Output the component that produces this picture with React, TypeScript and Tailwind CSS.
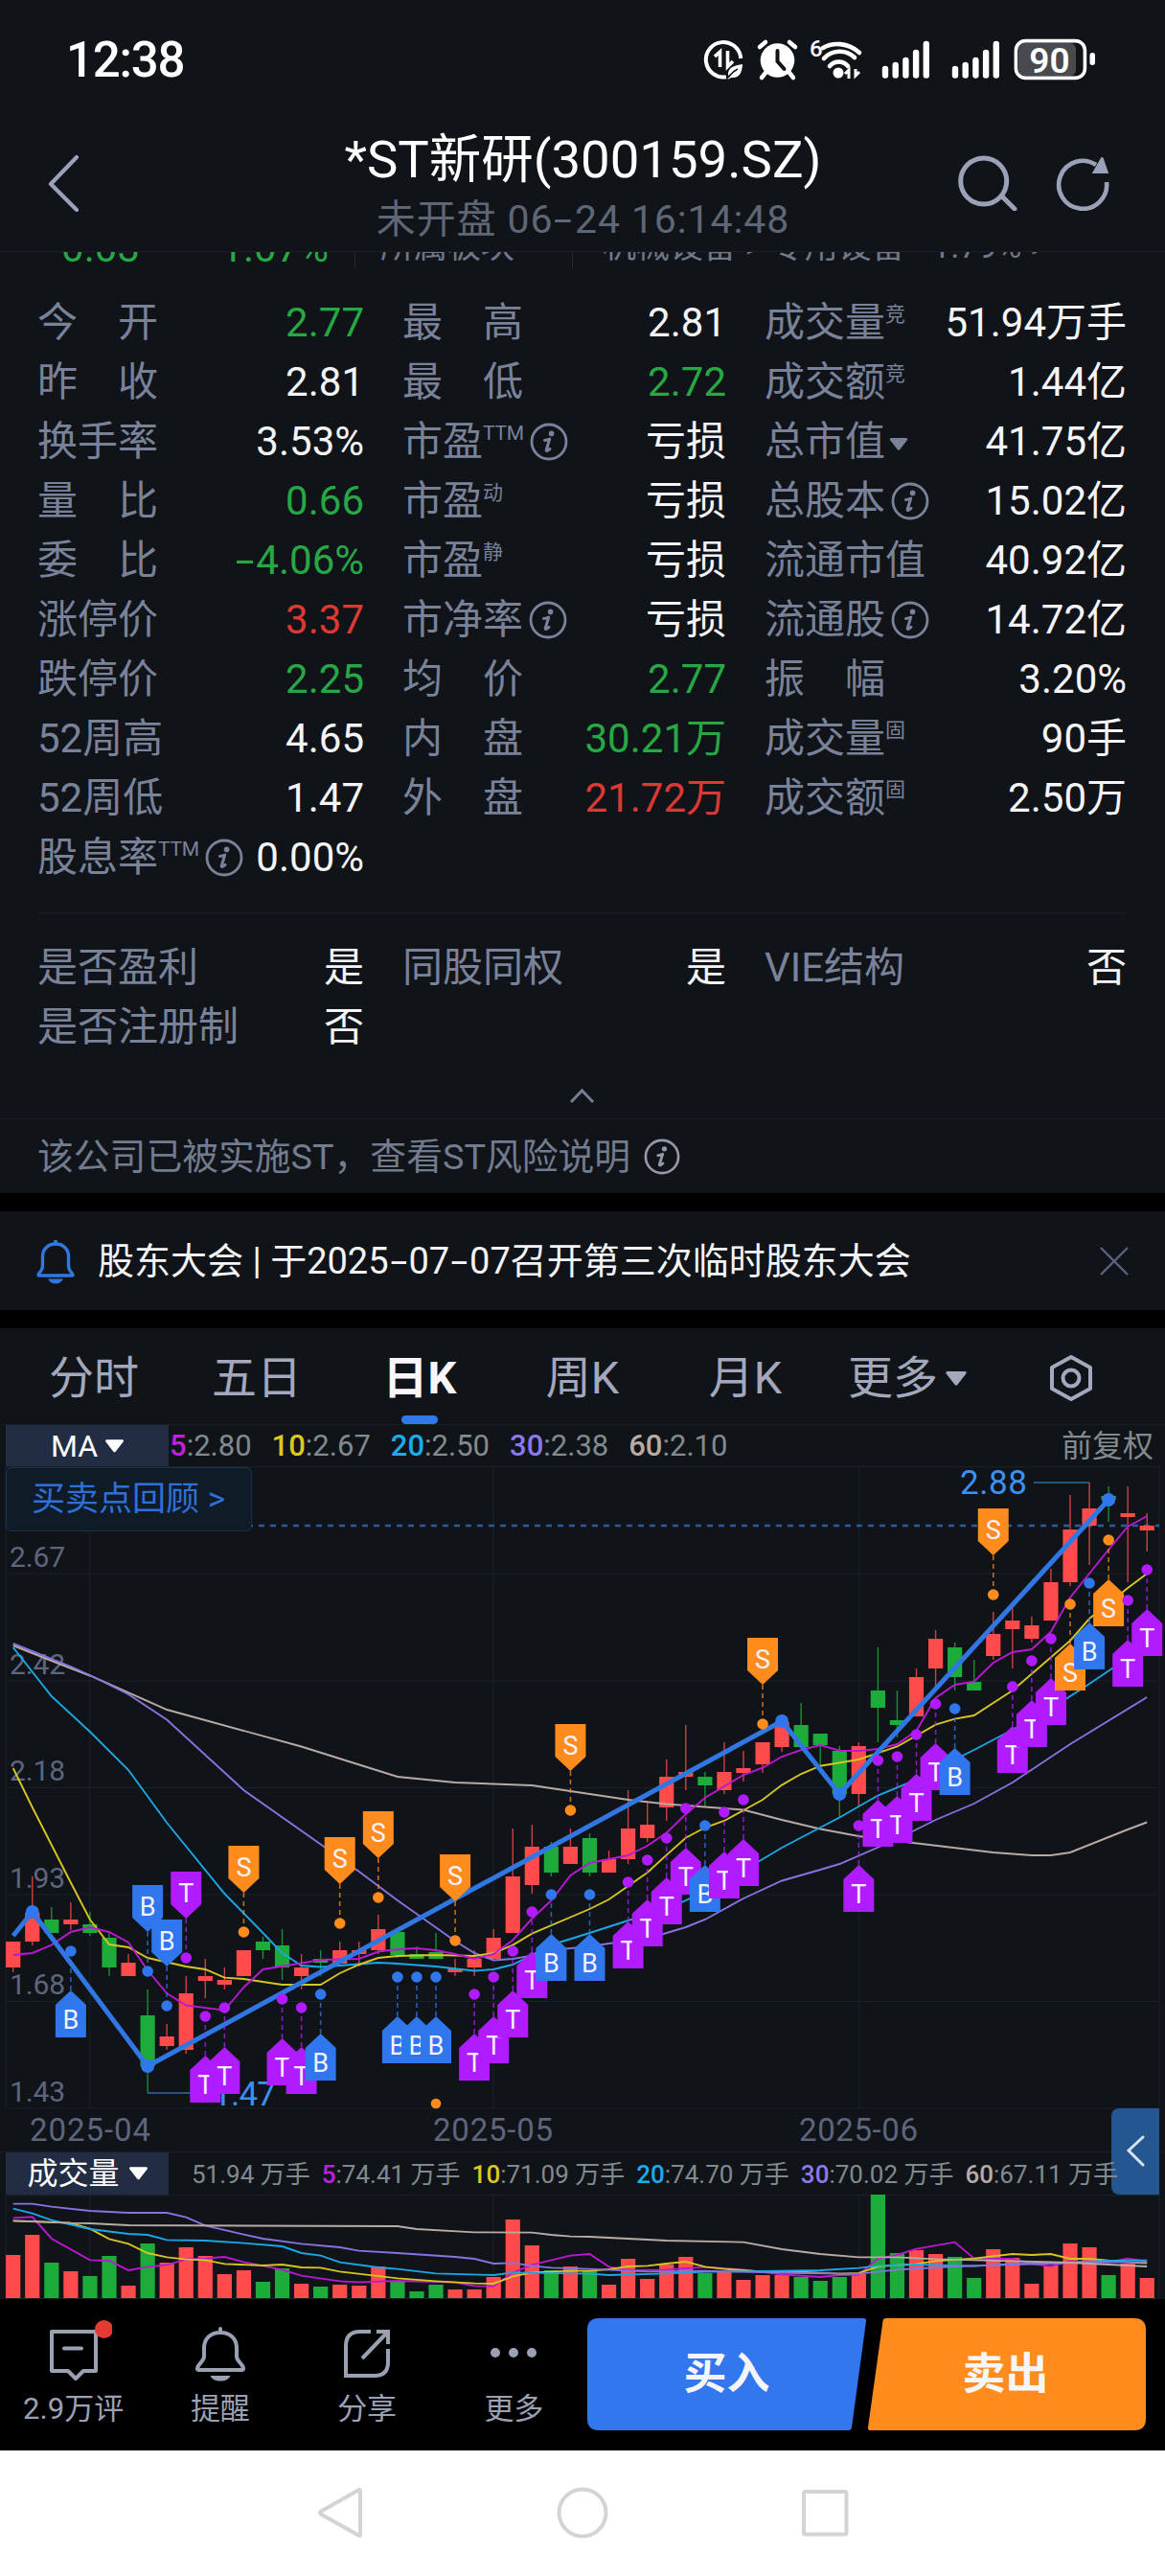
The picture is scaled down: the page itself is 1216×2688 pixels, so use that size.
import type { ReactNode } from 'react';
import clsx from 'clsx';

type Tone = 'up' | 'down' | 'plain';

interface Quote {
  label: string;
  value: string;
  tone?: Tone;
  sup?: string;
  info?: boolean;
  caret?: boolean;
}

type Candle = [kind: 'r' | 'g', top: number, bottom: number, high: number, low: number, volume: number];
type Point = [index: number, y: number];

interface Marker {
  index: number;
  dot: number;
  type: 'B' | 'S' | 'T';
  down?: boolean;
}

const quotes: Quote[] = [
  { label: '今　开', value: '2.77', tone: 'down' },
  { label: '最　高', value: '2.81' },
  { label: '成交量', value: '51.94万手', sup: '竞' },
  { label: '昨　收', value: '2.81' },
  { label: '最　低', value: '2.72', tone: 'down' },
  { label: '成交额', value: '1.44亿', sup: '竞' },
  { label: '换手率', value: '3.53%' },
  { label: '市盈', value: '亏损', sup: 'TTM', info: true },
  { label: '总市值', value: '41.75亿', caret: true },
  { label: '量　比', value: '0.66', tone: 'down' },
  { label: '市盈', value: '亏损', sup: '动' },
  { label: '总股本', value: '15.02亿', info: true },
  { label: '委　比', value: '-4.06%', tone: 'down' },
  { label: '市盈', value: '亏损', sup: '静' },
  { label: '流通市值', value: '40.92亿' },
  { label: '涨停价', value: '3.37', tone: 'up' },
  { label: '市净率', value: '亏损', info: true },
  { label: '流通股', value: '14.72亿', info: true },
  { label: '跌停价', value: '2.25', tone: 'down' },
  { label: '均　价', value: '2.77', tone: 'down' },
  { label: '振　幅', value: '3.20%' },
  { label: '52周高', value: '4.65' },
  { label: '内　盘', value: '30.21万', tone: 'down' },
  { label: '成交量', value: '90手', sup: '固' },
  { label: '52周低', value: '1.47' },
  { label: '外　盘', value: '21.72万', tone: 'up' },
  { label: '成交额', value: '2.50万', sup: '固' },
  { label: '股息率', value: '0.00%', sup: 'TTM', info: true },
];

const flags: Quote[] = [
  { label: '是否盈利', value: '是' },
  { label: '同股同权', value: '是' },
  { label: 'VIE结构', value: '否' },
  { label: '是否注册制', value: '否' },
];

// kind, body top, body bottom, wick top, wick bottom, volume bar top
const candles: Candle[] = [
  ['r', 2027, 2054, 2027, 2059, 2354],
  ['r', 1997, 2027, 1959, 2031, 2333],
  ['g', 2004, 2018, 1991, 2018, 2362],
  ['r', 2004, 2009, 1986, 2015, 2371],
  ['g', 2009, 2018, 1996, 2021, 2376],
  ['g', 2023, 2054, 2018, 2063, 2355],
  ['r', 2049, 2063, 2040, 2063, 2386],
  ['g', 2104, 2157, 2077, 2185, 2342],
  ['r', 2126, 2136, 2113, 2140, 2362],
  ['r', 2081, 2140, 2063, 2144, 2346],
  ['r', 2063, 2068, 2045, 2086, 2355],
  ['r', 2067, 2072, 2054, 2077, 2374],
  ['r', 2036, 2063, 2036, 2063, 2370],
  ['g', 2027, 2036, 2022, 2045, 2382],
  ['g', 2031, 2054, 2014, 2067, 2368],
  ['r', 2054, 2063, 2040, 2077, 2384],
  ['g', 2045, 2049, 2036, 2063, 2387],
  ['r', 2036, 2050, 2027, 2050, 2385],
  ['r', 2036, 2040, 2027, 2053, 2386],
  ['r', 2014, 2036, 1999, 2040, 2366],
  ['g', 2017, 2041, 2017, 2044, 2381],
  ['g', 2040, 2045, 2032, 2045, 2392],
  ['g', 2038, 2045, 2018, 2045, 2385],
  ['r', 2055, 2059, 2045, 2063, 2390],
  ['r', 2045, 2054, 2036, 2063, 2390],
  ['r', 2023, 2045, 2014, 2045, 2377],
  ['r', 1959, 2018, 1909, 2018, 2317],
  ['r', 1928, 1968, 1905, 1977, 2344],
  ['g', 1928, 1955, 1923, 1959, 2370],
  ['r', 1928, 1946, 1909, 1946, 2366],
  ['g', 1919, 1955, 1914, 1959, 2371],
  ['r', 1941, 1955, 1932, 1955, 2385],
  ['r', 1909, 1941, 1869, 1946, 2358],
  ['r', 1905, 1919, 1882, 1923, 2379],
  ['r', 1855, 1887, 1837, 1901, 2364],
  ['r', 1850, 1855, 1801, 1869, 2356],
  ['g', 1855, 1864, 1850, 1887, 2373],
  ['r', 1850, 1869, 1819, 1873, 2372],
  ['r', 1846, 1851, 1828, 1860, 2380],
  ['r', 1819, 1842, 1819, 1851, 2375],
  ['r', 1798, 1824, 1798, 1829, 2375],
  ['g', 1801, 1824, 1778, 1824, 2377],
  ['g', 1810, 1822, 1810, 1844, 2381],
  ['g', 1828, 1873, 1823, 1897, 2377],
  ['r', 1823, 1873, 1819, 1887, 2374],
  ['g', 1765, 1783, 1720, 1819, 2291],
  ['g', 1796, 1801, 1765, 1814, 2352],
  ['r', 1751, 1792, 1742, 1792, 2349],
  ['r', 1711, 1742, 1702, 1761, 2353],
  ['g', 1720, 1751, 1715, 1765, 2356],
  ['g', 1756, 1765, 1733, 1765, 2378],
  ['r', 1706, 1729, 1683, 1733, 2348],
  ['r', 1692, 1701, 1678, 1742, 2357],
  ['r', 1697, 1711, 1688, 1715, 2384],
  ['r', 1652, 1692, 1638, 1692, 2365],
  ['r', 1597, 1652, 1561, 1656, 2342],
  ['r', 1575, 1593, 1548, 1634, 2346],
  ['g', 1562, 1566, 1552, 1589, 2375],
  ['r', 1580, 1584, 1552, 1652, 2363],
  ['r', 1593, 1598, 1580, 1620, 2378],
];

const priceLines: { color: string; points: Point[] }[] = [
  {
    color: '#b9aaa4',
    points: [[0, 1718], [2, 1734], [4, 1749.5], [8, 1785], [15, 1823.5], [20, 1855], [21, 1857], [23, 1861], [27, 1864], [32, 1879], [34, 1883.5], [37, 1888], [38, 1889.5], [40, 1900], [42, 1909.5], [44, 1917], [46, 1922], [51, 1934], [53, 1937], [54, 1937], [55, 1934], [58, 1910], [59, 1902.5]],
  },
  {
    color: '#8573e0',
    points: [[0, 1716], [3, 1740], [4, 1749], [6, 1769], [8, 1795.5], [12, 1869], [16, 1925.5], [18, 1954], [20, 1984], [23, 2026.5], [24, 2039], [25, 2046.5], [26, 2045], [27, 2041.6], [28, 2036], [30, 2032], [31, 2029], [33, 2024], [35, 2012], [36, 2004], [38, 1982], [40, 1963.5], [42, 1952], [43, 1946], [46, 1920], [48, 1900], [50, 1883], [52, 1861], [55, 1821], [59, 1772]],
  },
  {
    color: '#1ba7e6',
    points: [[0, 1720], [2, 1771], [4, 1808], [6, 1848], [8, 1903], [11, 1977], [13, 2018], [14, 2039], [15, 2052], [16, 2053.5], [19, 2049], [20, 2050], [22, 2053], [24, 2057.5], [25, 2056], [26, 2051], [27, 2041], [28, 2030.5], [30, 2018], [32, 2005], [34, 1993], [36, 1975], [38, 1953], [40, 1929], [42, 1908], [43, 1897.5], [45, 1874.5], [47, 1858], [49, 1837], [50, 1827], [52, 1806], [54, 1784], [56, 1758], [58, 1731], [59, 1717]],
  },
  {
    color: '#d6c521',
    points: [[0, 1846], [1, 1887], [3, 1965.5], [4, 2004], [5, 2030], [6, 2033], [7, 2044], [9, 2053], [10, 2056], [11, 2064.6], [12, 2066], [14, 2072], [16, 2072], [17, 2060], [18, 2051], [19, 2044], [20, 2042], [22, 2041], [24, 2042], [25, 2039], [26, 2030.6], [27, 2018.6], [30, 1993], [31, 1983], [33, 1955], [34, 1936.6], [35, 1918.7], [36, 1908], [37, 1901], [38, 1890], [39, 1879], [40, 1863.6], [41, 1852], [42, 1843.7], [44, 1837], [46, 1823.5], [48, 1800.6], [49, 1794.6], [50, 1791], [52, 1765], [55, 1713], [56, 1690], [58, 1658], [59, 1643]],
  },
  {
    color: '#bb18d2',
    points: [[0, 2041], [1, 2039], [2, 2030.6], [3, 2017], [4, 2012], [5, 2017], [6, 2028], [7, 2057], [8, 2081], [9, 2093.5], [11, 2098.6], [12, 2074.7], [13, 2056], [15, 2049.5], [16, 2046], [18, 2045], [19, 2037.5], [20, 2035], [21, 2034], [22, 2036], [23, 2040], [24, 2045], [25, 2040], [26, 2025.5], [27, 2003], [28, 1984], [29, 1958], [30, 1945], [32, 1937], [33, 1927], [34, 1913.5], [35, 1894], [36, 1877], [38, 1853], [39, 1845.7], [40, 1834], [41, 1827], [42, 1822], [43, 1827.7], [44, 1828], [45, 1826], [46, 1821], [47, 1807], [48, 1772.6], [49, 1759], [50, 1755.6], [51, 1736], [52, 1725], [53, 1722], [54, 1703.7], [55, 1668], [57, 1618], [58, 1594], [59, 1583]],
  },
];

const volumeLines: { color: string; points: Point[] }[] = [
  {
    color: '#bb18d2',
    points: [[0, 286], [1, 283], [2, 351], [4, 418], [5, 420], [6, 450], [7, 439], [8, 433], [9, 416], [10, 413], [11, 408], [12, 424], [14, 448], [15, 467], [17, 484], [18, 487], [20, 483], [22, 486], [23, 488], [24, 499], [25, 500], [26, 457], [27, 433], [29, 404], [30, 399], [31, 439], [32, 450], [34, 448], [36, 440], [38, 448], [40, 463], [42, 471], [43, 465], [44, 464], [45, 414], [46, 402], [47, 383], [49, 362], [50, 413], [52, 414], [53, 430], [54, 437], [55, 422], [57, 425], [58, 413], [59, 422]],
  },
  {
    color: '#d6c521',
    points: [[0, 295], [3, 302], [4, 320], [5, 352], [6, 367], [7, 396], [8, 409], [9, 416], [10, 418], [11, 430], [13, 435], [14, 432], [15, 441], [16, 442], [17, 454], [20, 475], [22, 484], [24, 491], [25, 492], [26, 469], [27, 457], [29, 452], [30, 452], [31, 447], [32, 438], [33, 436], [34, 429], [35, 423], [36, 439], [37, 446], [39, 454], [41, 455], [43, 461], [44, 459], [45, 438], [47, 430], [48, 421], [50, 413], [52, 399], [53, 402], [54, 399], [55, 414], [56, 414], [58, 425], [59, 428]],
  },
  {
    color: '#1ba7e6',
    points: [[0, 257], [1, 272], [2, 293], [4, 321], [6, 336], [7, 339], [8, 355], [10, 357], [12, 365], [14, 375], [15, 396], [16, 404], [17, 425], [19, 441], [20, 446], [22, 460], [25, 465], [26, 457], [30, 461], [31, 465], [34, 460], [36, 455], [39, 453], [42, 450], [44, 443], [45, 436], [47, 432], [50, 437], [52, 430], [55, 426], [57, 420], [59, 419]],
  },
  {
    color: '#8573e0',
    points: [[0, 242], [1, 242], [2, 251], [4, 264], [6, 270], [8, 270], [9, 284], [10, 310], [12, 338], [13, 351], [15, 367], [17, 378], [18, 389], [20, 396], [23, 408], [24, 414], [25, 429], [26, 427], [27, 436], [28, 442], [30, 446], [33, 454], [36, 452], [38, 455], [41, 459], [44, 461], [46, 448], [49, 438], [52, 432], [56, 425], [59, 424]],
  },
  {
    color: '#b9aaa4',
    points: [[0, 295], [1, 297], [3, 302], [4, 303], [6, 309], [20, 312], [21, 321], [24, 331], [27, 332], [28, 339], [29, 344], [30, 345], [34, 357], [38, 362], [40, 384], [42, 399], [44, 409], [46, 409], [48, 415], [52, 421], [55, 426], [57, 432], [59, 438]],
  },
];

const trend: Point[] = [[0, 2021], [1, 1996], [7, 2157], [40, 1797], [43, 1873], [57, 1566]];

const markers: Marker[] = [
  { index: 3, dot: 2037, type: 'B' },
  { index: 7, dot: 2058, type: 'B', down: true },
  { index: 8, dot: 2094, type: 'B', down: true },
  { index: 9, dot: 2044, type: 'T', down: true },
  { index: 10, dot: 2105, type: 'T' },
  { index: 11, dot: 2096, type: 'T' },
  { index: 12, dot: 2017, type: 'S', down: true },
  { index: 14, dot: 2087, type: 'T' },
  { index: 15, dot: 2096, type: 'T' },
  { index: 16, dot: 2082, type: 'B' },
  { index: 17, dot: 2008, type: 'S', down: true },
  { index: 19, dot: 1981, type: 'S', down: true },
  { index: 20, dot: 2064, type: 'B' },
  { index: 21, dot: 2064, type: 'B' },
  { index: 22, dot: 2064, type: 'B' },
  { index: 23, dot: 2026, type: 'S', down: true },
  { index: 24, dot: 2082, type: 'T' },
  { index: 25, dot: 2064, type: 'T' },
  { index: 26, dot: 2037, type: 'T' },
  { index: 27, dot: 1996, type: 'T' },
  { index: 28, dot: 1978, type: 'B' },
  { index: 29, dot: 1890, type: 'S', down: true },
  { index: 30, dot: 1978, type: 'B' },
  { index: 32, dot: 1965, type: 'T' },
  { index: 33, dot: 1942, type: 'T' },
  { index: 34, dot: 1919, type: 'T' },
  { index: 35, dot: 1888, type: 'T' },
  { index: 36, dot: 1906, type: 'B' },
  { index: 37, dot: 1892, type: 'T' },
  { index: 38, dot: 1879, type: 'T' },
  { index: 39, dot: 1800, type: 'S', down: true },
  { index: 44, dot: 1906, type: 'T' },
  { index: 45, dot: 1838, type: 'T' },
  { index: 46, dot: 1834, type: 'T' },
  { index: 47, dot: 1811, type: 'T' },
  { index: 48, dot: 1779, type: 'T' },
  { index: 49, dot: 1784, type: 'B' },
  { index: 51, dot: 1665, type: 'S', down: true },
  { index: 52, dot: 1761, type: 'T' },
  { index: 53, dot: 1734, type: 'T' },
  { index: 54, dot: 1711, type: 'T' },
  { index: 55, dot: 1675, type: 'S' },
  { index: 56, dot: 1653, type: 'B' },
  { index: 57, dot: 1608, type: 'S' },
  { index: 58, dot: 1671, type: 'T' },
  { index: 59, dot: 1639, type: 'T' },
];

const markerColors = { B: '#3077ee', S: '#ff8c1c', T: '#b01cff' };
const candleColors = { r: '#ff4b4b', g: '#1dab3a' };
const averages = [
  { period: '5', price: '2.80', volume: '74.41', color: 'text-[#c01fe0]' },
  { period: '10', price: '2.67', volume: '71.09', color: 'text-[#dcc81f]' },
  { period: '20', price: '2.50', volume: '74.70', color: 'text-[#1cabed]' },
  { period: '30', price: '2.38', volume: '70.02', color: 'text-[#8c78ec]' },
  { period: '60', price: '2.10', volume: '67.11', color: 'text-[#b9aaa4]' },
];

const xAt = (index: number) => 13.7 + index * 20.06;
const toPoints = (points: Point[]) =>
  points.map(([i, y]) => `${xAt(i).toFixed(1)},${y}`).join(' ');

const Tabular = ({ text }: { text: string }) => (
  <>
    {text.split(/(-)/).map((part, i) =>
      part === '-' ? (
        <span key={i} className="inline-block w-[0.55em] scale-x-[1.7] text-center">
          -
        </span>
      ) : (
        part
      ),
    )}
  </>
);

const InfoIcon = ({ className }: { className?: string }) => (
  <svg viewBox="0 0 40 40" className={clsx('shrink-0', className)} fill="none">
    <circle cx="20" cy="20" r="18" stroke="currentColor" strokeWidth="2.8" />
    <circle cx="22.6" cy="11.4" r="2.8" fill="currentColor" />
    <path
      d="M15.5 18.5c2.6-.2 4-1 5.2-1.4l-3.4 11.2c-.4 1.6.6 1.9 3.7-.9"
      stroke="currentColor"
      strokeWidth="3"
      strokeLinecap="round"
      strokeLinejoin="round"
    />
  </svg>
);

const Caret = ({ className }: { className?: string }) => (
  <svg viewBox="0 0 20 14" className={clsx('shrink-0', className)} fill="currentColor">
    <path d="M1.5 0h17c1.3 0 1.9 1.3 1.1 2.3l-8.4 10.8c-.6.8-1.8.8-2.4 0L.4 2.3C-.4 1.3.2 0 1.5 0z" />
  </svg>
);

const QuoteCell = ({ label, value, tone = 'plain', sup, info, caret }: Quote) => (
  <div className="flex h-[62px] items-center justify-between whitespace-nowrap">
    <div className="flex items-center text-[#7a8299]">
      <span>{label}</span>
      {sup && (
        <span className="mb-[18px] text-[21px] leading-[24px] tracking-[-0.3px]">{sup}</span>
      )}
      {info && <InfoIcon className="ml-[6px] size-[40px]" />}
      {caret && <Caret className="mt-1 ml-1 h-[13px] w-[20px]" />}
    </div>
    <span
      className={clsx(
        tone === 'up' && 'text-[#dd3934]',
        tone === 'down' && 'text-[#27a844]',
        tone === 'plain' && 'text-[#f5f5f8]',
      )}
    >
      <Tabular text={value} />
    </span>
  </div>
);

const StatusBar = () => (
  <div className="flex h-[124px] items-center justify-between pr-[70px] pl-[69px] text-white">
    <span className="mt-[2px] text-[51px] leading-[60px] font-medium tracking-[-1.2px]">12:38</span>
    <svg width="412" height="46" viewBox="734 38 412 46" fill="none">
      <path d="M758 79.2A18.2 18.2 0 1 1 773.2 60" stroke="#fff" strokeWidth="4" />
      <path d="M746 58l5.5-5v16M765 63l-5.5 5.5V52" stroke="#fff" strokeWidth="3.6" />
      <path d="M775 66c-9 1-15 4-15 10 0 2 1 3 1 3s-1 1-1.5 3c2-1 3-2 4-2 8 1 11-5 11.5-14z" fill="#fff" />
      <path d="M760 80c3-4 6-7 10-9" stroke="#101419" strokeWidth="1.5" />
      <circle cx="811.5" cy="62" r="17.8" fill="#fff" />
      <path d="M793 48l6-5M830 48l-6-5M799 75l-4 5M824 75l4 5" stroke="#fff" strokeWidth="4.5" strokeLinecap="round" />
      <path d="M811.5 52v11l7 8" stroke="#101419" strokeWidth="4" strokeLinecap="round" />
      <text x="845" y="58" fontSize="24" fontWeight="500" fill="#fff">6</text>
      <path d="M859 49c10-6 26-6 38 5M860 60c8-9 23-10 32-1M866 68c5-6 14-6 19 0" stroke="#fff" strokeWidth="4.6" strokeLinecap="round" />
      <circle cx="875" cy="75" r="5.5" fill="#fff" />
      <path d="M882 76l4-4v9M897 74l-4 4V71" stroke="#fff" strokeWidth="3" />
      {[924, 997].map((left) => (
        <g key={left} stroke="#fff" strokeWidth="6.4" strokeLinecap="round">
          {[71, 67, 62, 54, 45].map((top, i) => (
            <path key={top} d={`M${left + i * 10.7} ${top}V77.5`} />
          ))}
        </g>
      ))}
      <rect x="1063" y="44" width="60" height="34" rx="6" fill="#484a50" />
      <rect x="1060.4" y="41.6" width="72" height="38.8" rx="10" stroke="#fff" strokeWidth="3.6" />
      <rect x="1137.5" y="54" width="5.5" height="13" rx="2.7" fill="#fff" />
      <text x="1095.5" y="74.5" fontSize="37" fontWeight="600" fill="#fff" textAnchor="middle">90</text>
    </svg>
  </div>
);

const Header = () => (
  <div className="flex h-[138px] items-start justify-between pr-[56px] pl-[49px] text-[#9ba1b6]">
    <svg width="34" height="60" viewBox="0 0 34 60" fill="none" className="mt-[37px]">
      <path d="M31 3L4 31l27 27" stroke="currentColor" strokeWidth="4.2" strokeLinejoin="round" strokeLinecap="round" />
    </svg>
    <div className="ml-[136px] flex flex-col items-center whitespace-nowrap">
      <h1 className="mt-[9px] text-[54.5px] leading-[66px] text-white">*ST新研(300159.SZ)</h1>
      <p className="mt-[2px] text-[41px] leading-[56px] tracking-[0.9px] text-[#5f6675]">
        <Tabular text="未开盘 06-24 16:14:48" />
      </p>
    </div>
    <svg width="162" height="60" viewBox="1000 160 162 60" fill="none" className="mt-9">
      <circle cx="1028.7" cy="189" r="24" stroke="currentColor" strokeWidth="5" />
      <path d="M1048 205l13 13" stroke="currentColor" strokeWidth="5" strokeLinecap="round" />
      <path d="M1157 190a25 25 0 1 1-11-18" stroke="currentColor" strokeWidth="4.6" />
      <path d="M1141.7 181l9.5-16.5q1.5-1 2.5.5l5.5 16z" fill="currentColor" />
    </svg>
  </div>
);

// Row scrolled under the header, only the bottom of it shows
const ClippedRow = () => (
  <div className="h-[44px] overflow-hidden border-t border-[#1a1d23]">
    <div className="-mt-[35px] flex h-[60px] items-center whitespace-nowrap text-[#6f7789]">
      <span className="w-[146px] text-right text-[42px] text-[#27a844]">-0.03</span>
      <span className="w-[197px] text-right text-[42px] text-[#27a844]">-1.07%</span>
      <span className="mt-6 ml-[27px] h-[20px] w-px bg-[#232832]" />
      <span className="ml-[26px] w-[200px] text-[35px]">所属板块</span>
      <span className="mt-6 h-[20px] w-px bg-[#232832]" />
      <span className="ml-[31px] text-[35px]">
        机械设备 &gt; 专用设备 <Tabular text="-1.79%" /> &gt;
      </span>
    </div>
  </div>
);

const Badge = ({ index, dot, type, down }: Marker) => {
  const x = xAt(index);
  const color = markerColors[type];
  const dir = down ? -1 : 1;
  return (
    <g>
      <path
        d={`M${x} ${dot + 9 * dir}V${dot + 41 * dir}`}
        stroke={color}
        strokeWidth="1.6"
        strokeDasharray="5 4"
        opacity="0.75"
      />
      <circle cx={x} cy={dot} r="5.8" fill={color} />
      <path
        d={`M${x} ${dot + 41 * dir}l16 ${15 * dir}v${34 * dir}h-32v${-34 * dir}z`}
        fill={color}
      />
      <text
        x={x}
        y={down ? dot - 58.5 : dot + 80.5}
        fontSize="27"
        fill="#f6f1ff"
        textAnchor="middle"
      >
        {type}
      </text>
    </g>
  );
};

const PriceChart = () => (
  <div className="relative h-[715px]">
    <svg width="1216" height="715" viewBox="0 1531 1216 715" className="block" fill="none">
      <g stroke="#17212b" strokeWidth="1.2">
        {[1531.6, 1643, 1755, 1866.5, 1978, 2089.5, 2201].map((y) => (
          <path key={y} d={`M6 ${y}H1210`} />
        ))}
        {[6, 93.7, 515, 896.7, 1210].map((x) => (
          <path key={x} d={`M${x} 1531V2201`} />
        ))}
      </g>
      <path d="M6 1593H1210" stroke="#2b599c" strokeWidth="2.4" strokeDasharray="6 6" />
      <g fill="#5e657d" fontSize="30">
        {['2.67', '2.42', '2.18', '1.93', '1.68', '1.43'].map((label, i) => (
          <text key={label} x="10" y={1636 + i * 111.6} textLength="58">
            {label}
          </text>
        ))}
      </g>
      <g fill="#5e657d" fontSize="33">
        <text x="31" y="2235" textLength="126">2025-04</text>
        <text x="452" y="2235" textLength="125">2025-05</text>
        <text x="834" y="2235" textLength="124">2025-06</text>
      </g>
      {candles.map(([kind, top, bottom, high, low], i) => (
        <g key={i}>
          <path d={`M${xAt(i)} ${high}V${low}`} stroke={candleColors[kind]} strokeWidth="1.4" opacity="0.8" />
          <rect x={xAt(i) - 7.6} y={top} width="15.2" height={bottom - top} fill={candleColors[kind]} />
        </g>
      ))}
      {priceLines.map((line) => (
        <polyline key={line.color} points={toPoints(line.points)} stroke={line.color} strokeWidth="1.9" />
      ))}
      <polyline points={toPoints(trend)} stroke="#3077e4" strokeWidth="5" />
      {trend.slice(1).map(([i, y]) => (
        <circle key={i} cx={xAt(i)} cy={y} r="7" fill="#3077ee" />
      ))}
      <path d="M1079 1548H1137M154 2185H228" stroke="#2e6aa8" strokeWidth="1.6" />
      <text x="1002" y="1560" fontSize="35" fill="#3c92f4" textLength="70">2.88</text>
      <text x="222" y="2198" fontSize="35" fill="#3c92f4" textLength="66">1.47</text>
      <circle cx={xAt(22)} cy="2196" r="5.3" fill="#ff8c1c" />
      {markers.map((marker) => (
        <Badge key={marker.index} {...marker} />
      ))}
    </svg>
    <button
      type="button"
      className="absolute top-px left-[6px] flex h-[67px] w-[257px] items-center rounded-md border border-[#19334f] bg-[#101b28] pt-[2px] pl-[26px] text-[35px] whitespace-nowrap text-[#2f70d8]"
    >
      买卖点回顾 &gt;
    </button>
    <button
      type="button"
      className="absolute top-[670px] left-[1160px] flex h-[90px] w-[50px] items-center justify-center rounded-l-lg bg-[#24568f]"
    >
      <svg width="20" height="34" viewBox="0 0 20 34" fill="none">
        <path d="M18 2L3 16l15 15" stroke="#d6e2f2" strokeWidth="3" strokeLinecap="round" />
      </svg>
    </button>
  </div>
);

const VolumeChart = () => (
  <svg width="1216" height="109" viewBox="0 2291 1216 109" className="block" fill="none">
    <g stroke="#17212b" strokeWidth="1.2">
      <path d="M6 2291.6H1210M6 2399.5H1210" />
      {[6, 93.7, 515, 896.7, 1210].map((x) => (
        <path key={x} d={`M${x} 2291V2399`} />
      ))}
    </g>
    {candles.map(([kind, , , , , top], i) => (
      <rect key={i} x={xAt(i) - 7.6} y={top} width="15.2" height={2399 - top} fill={candleColors[kind]} />
    ))}
    {volumeLines.map((line) => (
      <polyline
        key={line.color}
        points={toPoints(line.points.map(([i, v]) => [i, 2220 + v / 3]))}
        stroke={line.color}
        strokeWidth="1.9"
      />
    ))}
  </svg>
);

const Tab = ({ children, active }: { children: ReactNode; active?: boolean }) => (
  <div
    className={clsx(
      'relative flex flex-1 items-center justify-center pt-[4px] text-[47px] whitespace-nowrap',
      active ? 'font-bold text-[#f8f6fb]' : 'text-[#a3a8bd]',
    )}
  >
    {children}
    {active && (
      <span className="absolute bottom-0 left-1/2 h-[9px] w-[38px] -translate-x-1/2 rounded-full bg-[#3277ec]" />
    )}
  </div>
);

const Action = ({ label, children }: { label: string; children: ReactNode }) => (
  <div className="flex w-[153.3px] flex-col items-center text-[#9ba1b4]">
    <svg width="80" height="70" viewBox="0 0 80 70" fill="none" stroke="currentColor" strokeWidth="4">
      {children}
    </svg>
    <span className="mt-[3px] text-[31px] leading-[40px]">{label}</span>
  </div>
);

const App = () => {
  return (
    <div className="w-[1216px] bg-[#101419] font-[Roboto,'Noto_Sans_CJK_SC',sans-serif]">
      <StatusBar />
      <Header />
      <ClippedRow />

      <div className="grid grid-cols-[341px_338px_378px] gap-x-[40px] pl-[39px] text-[42px] leading-[62px]">
        {quotes.map((quote, i) => (
          <QuoteCell key={i} {...quote} />
        ))}
      </div>
      <div className="mx-[40px] mt-[26px] h-px bg-[#1a1e24]" />
      <div className="mt-[26px] grid grid-cols-[341px_338px_378px] gap-x-[40px] pl-[39px] text-[42px] leading-[62px]">
        {flags.map((flag) => (
          <QuoteCell key={flag.label} {...flag} />
        ))}
      </div>
      <div className="flex h-[64px] items-end justify-center pb-[15px]">
        <svg width="27" height="17" viewBox="0 0 27 17" fill="none" className="-translate-x-px">
          <path d="M2 15L13.5 3 25 15" stroke="#757d90" strokeWidth="3" />
        </svg>
      </div>
      <div className="flex h-[78px] items-center border-t border-[#1a1e24] pl-[39px] text-[37.8px] text-[#737b8f]">
        <span className="mt-px whitespace-nowrap">该公司已被实施ST，查看ST风险说明</span>
        <InfoIcon className="ml-[14px] size-[38px] text-[#9399ab]" />
      </div>

      <div className="flex h-[141px] items-center border-y-[19px] border-black pr-[38px] pl-[37px] text-[38px] text-[#f4f4f7]">
        <svg width="42" height="46" viewBox="0 0 42 46" fill="none" className="mt-[2px] mr-[23px]">
          <path
            d="M21 4c-8 0-13.5 5.5-13.5 13v8c0 5-1 6.5-4 10-1 1.2-.5 2 .8 2h33.4c1.3 0 1.8-.8.8-2-3-3.5-4-5-4-10v-8C34.5 9.5 29 4 21 4z"
            stroke="#3277de"
            strokeWidth="3.4"
          />
          <path d="M21 4V1" stroke="#3277de" strokeWidth="3.6" strokeLinecap="round" />
          <path d="M13 40.5h16c-1.5 3-4.5 5-8 5s-6.5-2-8-5z" fill="#3277de" />
        </svg>
        <span className="mt-px whitespace-nowrap">
          <Tabular text="股东大会 | 于2025-07-07召开第三次临时股东大会" />
        </span>
        <svg width="30" height="30" viewBox="0 0 30 30" fill="none" className="ml-auto">
          <path d="M1 1l28 28M29 1L1 29" stroke="#5d6480" strokeWidth="2.4" />
        </svg>
      </div>

      <div className="flex h-[100px] px-[13px]">
        <Tab>分时</Tab>
        <Tab>五日</Tab>
        <Tab active>日K</Tab>
        <Tab>周K</Tab>
        <Tab>月K</Tab>
        <Tab>
          更多
          <Caret className="mr-[2px] ml-[8px] h-[15px] w-[22px]" />
        </Tab>
        <Tab>
          <svg width="46" height="50" viewBox="0 0 46 50" fill="none" stroke="currentColor" strokeWidth="4">
            <path d="M23 3l20 11v22L23 47 3 36V14z" strokeLinejoin="round" />
            <circle cx="23" cy="25" r="8.5" />
          </svg>
        </Tab>
      </div>

      <div className="flex h-[44px] items-center border-t border-[#191f27] pr-[12px] pl-[6px] text-[32px] leading-[44px] whitespace-nowrap text-[#818b8f]">
        <div className="flex h-[44px] w-[170px] items-center justify-center bg-[#222d43] text-white">
          MA
          <Caret className="ml-2 h-[14px] w-[19px]" />
        </div>
        <div className="flex gap-[21px] pl-px text-[31px]">
          {averages.map((item) => (
            <span key={item.period}>
              <b className={clsx('font-medium', item.color)}>{item.period}</b>:{item.price}
            </span>
          ))}
        </div>
        <span className="ml-auto">前复权</span>
      </div>
      <PriceChart />
      <div className="flex h-[45px] items-center border-t border-[#191f27] pl-[6px] text-[26px] leading-[45px] whitespace-nowrap text-[#818b8f]">
        <div className="flex h-[45px] w-[170px] items-center justify-center bg-[#222d43] text-[32px] text-white">
          成交量
          <Caret className="ml-[10px] h-[14px] w-[19px]" />
        </div>
        <div className="relative mt-[2px] flex gap-[12px] pl-[24px]">
          <span>51.94 万手</span>
          {averages.map((item) => (
            <span key={item.period}>
              <b className={clsx('font-medium', item.color)}>{item.period}</b>:{item.volume} 万手
            </span>
          ))}
        </div>
      </div>
      <VolumeChart />

      <div className="flex h-[158px] bg-black pt-[20px]">
        <div className="flex w-[613px] pt-[2px]">
          <Action label="2.9万评">
            <path d="M17 12h46v41H50l-8 8-8-8H17z" strokeLinejoin="round" />
            <path d="M30 29.5h18" strokeLinecap="round" />
            <circle cx="71.5" cy="9.5" r="9.5" fill="#e53a34" stroke="none" />
          </Action>
          <Action label="提醒">
            <path d="M40 13c-11 0-17 7-17 16v9c0 5-6 7-7 12-.3 1.2.4 2 1.6 2h44.8c1.2 0 1.9-.8 1.6-2-1-5-7-7-7-12v-9c0-9-6-16-17-16zM40 13V9" strokeLinecap="round" />
            <path d="M29.5 58h21c-2 4-5 5.5-10.5 5.5S31.5 62 29.5 58z" fill="currentColor" stroke="none" />
          </Action>
          <Action label="分享">
            <path d="M44 12H33Q18 12 18 27v31h30q14 0 14-14V30M50 12h12v13M62 12L35 40" />
          </Action>
          <Action label="更多">
            <g fill="currentColor" stroke="none">
              <circle cx="21" cy="34" r="5" />
              <circle cx="40" cy="34" r="5" />
              <circle cx="59" cy="34" r="5" />
            </g>
          </Action>
        </div>
        <div className="relative h-[117px] w-[583px] text-[45px] leading-[117px] font-bold text-[#f5f5fa]">
          <svg width="583" height="117" viewBox="0 0 583 117" className="absolute">
            <path d="M12 0H288q3.5 0 3 3L276 114q-.4 3-3.5 3H12Q0 117 0 105V12Q0 0 12 0z" fill="#3277ee" />
            <path d="M312 0H571q12 0 12 12v93q0 12-12 12H296q-3.5 0-3-3L308.5 3q.4-3 3.5-3z" fill="#ff8c1c" />
          </svg>
          <div className="relative flex text-center">
            <span className="w-[291px]">买入</span>
            <span className="w-[291px]">卖出</span>
          </div>
        </div>
      </div>

      <div className="flex h-[130px] items-center justify-center bg-white">
        <svg width="560" height="60" viewBox="328 2593 560 60" fill="none" stroke="#d4d3d6" strokeWidth="4">
          <path d="M376 2600v46q0 2-2 .5l-39-22q-2-1.5 0-3l39-22q2-1.5 2 .5z" />
          <circle cx="608" cy="2623" r="24.5" />
          <rect x="839" y="2601" width="44.5" height="44.5" rx="1.5" />
        </svg>
      </div>
    </div>
  );
};

export default App;
